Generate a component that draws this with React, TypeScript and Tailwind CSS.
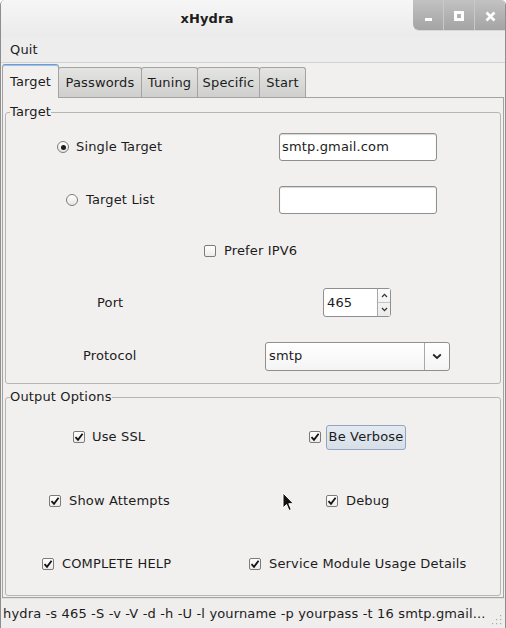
import React from 'react';

const FONT = { fontFamily: '"DejaVu Sans", Verdana, sans-serif' };

function Check({ checked }: { checked?: boolean }) {
  return (
    <span className="flex h-[12px] w-[12px] shrink-0 items-center justify-center rounded-[2px] border border-[#7b7b7b] bg-gradient-to-b from-white to-[#ececec]">
      {checked && (
        <svg width="10" height="10" viewBox="0 0 10 10">
          <path d="M1.5 5.2 L4 7.8 L8.6 1.8" fill="none" stroke="#111" strokeWidth="1.8" />
        </svg>
      )}
    </span>
  );
}

function Radio({ checked }: { checked?: boolean }) {
  return (
    <span className="flex h-[12px] w-[12px] shrink-0 items-center justify-center rounded-full border border-[#7b7b7b] bg-gradient-to-b from-white to-[#e6e6e6]">
      {checked && <span className="h-[5px] w-[5px] rounded-full bg-[#1e1e1e]" />}
    </span>
  );
}

function Tab({ label, width, active }: { label: string; width: string; active?: boolean }) {
  if (active) {
    return (
      <div className={`relative z-10 -mb-px flex h-[34px] items-center justify-center rounded-t-[3px] border border-b-0 border-[#a3a3a3] border-t-[#6f9bd0] bg-[#f1f0ef] shadow-[inset_0_1px_0_#9fc0e6] ${width}`}>
        {label}
      </div>
    );
  }
  return (
    <div className={`-ml-px flex h-[30px] items-center justify-center rounded-t-[3px] border border-b-0 border-[#a3a3a3] bg-gradient-to-b from-[#e4e4e3] to-[#cfcfce] ${width}`}>
      {label}
    </div>
  );
}

export default function App() {
  return (
    <div
      style={FONT}
      className="relative flex h-[628px] w-[506px] flex-col overflow-hidden rounded-t-[5px] border-x border-[#8e8e8e] bg-[#f1f0ef] text-[13px] leading-[16px] tracking-[0.15px] text-[#1c1c1c]"
    >
      {/* title bar */}
      <div className="flex h-[37px] shrink-0 items-start bg-gradient-to-b from-[#f6f6f6] to-[#ebebeb]">
        <div className="flex h-[37px] flex-1 items-center justify-center font-bold">xHydra</div>
        <div className="flex h-[30px] w-[92px] overflow-hidden rounded-bl-[6px] bg-gradient-to-b from-[#c2c2c2] to-[#a4a4a4] shadow-[0_1px_0_#d8d8d8]">
          <div className="flex w-[31px] items-center justify-center border-r border-[#c9c9c9]">
            <span className="mt-[9px] h-[3px] w-[7px] bg-white" />
          </div>
          <div className="flex w-[31px] items-center justify-center border-r border-[#c9c9c9]">
            <span className="mt-[2px] h-[10px] w-[10px] border-[3px] border-white" />
          </div>
          <div className="flex flex-1 items-center justify-center">
            <svg width="11" height="11" viewBox="0 0 11 11" className="mt-[2px]">
              <path d="M1.5 1.5 L9.5 9.5 M9.5 1.5 L1.5 9.5" stroke="white" strokeWidth="2.6" />
            </svg>
          </div>
        </div>
      </div>

      {/* menubar */}
      <div className="flex h-[26px] shrink-0 items-center border-b border-[#d3d2d1] bg-[#eeeded] pl-[9px]">Quit</div>

      {/* tabs */}
      <div className="flex h-[34px] shrink-0 items-end pl-[1px]">
        <Tab label="Target" width="w-[57px]" active />
        <Tab label="Passwords" width="w-[84px]" />
        <Tab label="Tuning" width="w-[57px]" />
        <Tab label="Specific" width="w-[63px]" />
        <Tab label="Start" width="w-[47px]" />
      </div>

      {/* notebook page */}
      <div className="ml-[1px] mr-[1px] flex h-[501px] shrink-0 flex-col border border-[#a3a3a3] bg-[#f1f0ef] px-[2px]">
        <fieldset className="mt-[6px] rounded-[3px] border border-[#b6b5b4] pb-[13px] pt-[13px]">
          <legend className="ml-[4px] leading-[16px]">Target</legend>

          <div className="flex h-[28px] items-center">
            <div className="flex w-[273px] items-center gap-[7px] pl-[51px]">
              <Radio checked />
              <span>Single Target</span>
            </div>
            <div className="flex h-[28px] w-[158px] items-center rounded-[3px] border border-[#8f8f8f] bg-white pl-[2px] shadow-[inset_0_1px_1px_#d6d6d6]">
              smtp.gmail.com
            </div>
          </div>

          <div className="mt-[25px] flex h-[28px] items-center">
            <div className="flex w-[273px] items-center gap-[8px] pl-[60px]">
              <Radio />
              <span>Target List</span>
            </div>
            <div className="h-[28px] w-[158px] rounded-[3px] border border-[#8f8f8f] bg-white shadow-[inset_0_1px_1px_#d6d6d6]" />
          </div>

          <div className="mt-[27px] flex h-[20px] items-center gap-[8px] pl-[198px]">
            <Check />
            <span>Prefer IPV6</span>
          </div>

          <div className="mt-[27px] flex h-[29px] items-center">
            <div className="w-[317px] pl-[91px]">Port</div>
            <div className="flex h-[29px] w-[68px] rounded-[3px] border border-[#8f8f8f] bg-white">
              <div className="flex flex-1 items-center pl-[3px]">465</div>
              <div className="flex w-[13px] flex-col border-l border-[#a8a8a8] bg-gradient-to-b from-[#fbfbfb] to-[#ebebeb]">
                <div className="flex flex-1 items-center justify-center border-b border-[#c4c4c4]">
                  <svg width="7" height="5" viewBox="0 0 7 5">
                    <path d="M1 4 L3.5 1.3 L6 4" fill="none" stroke="#333" strokeWidth="1.2" />
                  </svg>
                </div>
                <div className="flex flex-1 items-center justify-center">
                  <svg width="7" height="5" viewBox="0 0 7 5">
                    <path d="M1 1 L3.5 3.7 L6 1" fill="none" stroke="#333" strokeWidth="1.2" />
                  </svg>
                </div>
              </div>
            </div>
          </div>

          <div className="mt-[25px] flex h-[28px] items-center">
            <div className="w-[259px] pl-[77px]">Protocol</div>
            <div className="flex h-[29px] w-[185px] rounded-[3px] border border-[#8f8f8f] bg-gradient-to-b from-white to-[#f4f4f4]">
              <div className="flex flex-1 items-center pl-[3px]">smtp</div>
              <div className="flex w-[25px] items-center justify-center border-l border-[#a8a8a8]">
                <svg width="10" height="7" viewBox="0 0 10 7">
                  <path d="M1.2 1.5 L5 5 L8.8 1.5" fill="none" stroke="#222" strokeWidth="1.7" />
                </svg>
              </div>
            </div>
          </div>
        </fieldset>

        <fieldset className="mt-[5px] mb-[1px] flex-1 rounded-[3px] border border-[#b6b5b4] pt-[20px]">
          <legend className="ml-[4px] leading-[16px]">Output Options</legend>

          <div className="flex h-[24px] items-center">
            <div className="flex w-[303px] items-center gap-[7px] pl-[67px]">
              <Check checked />
              <span>Use SSL</span>
            </div>
            <div className="flex items-center gap-[5px]">
              <Check checked />
              <span className="flex h-[25px] w-[80px] items-center justify-center rounded-[3px] border border-[#93a5ba] bg-gradient-to-b from-[#e4eaf1] to-[#d6dfe9]">
                Be Verbose
              </span>
            </div>
          </div>

          <div className="mt-[40px] flex h-[24px] items-center">
            <div className="flex w-[320px] items-center gap-[8px] pl-[43px]">
              <Check checked />
              <span>Show Attempts</span>
            </div>
            <div className="flex items-center gap-[8px]">
              <Check checked />
              <span>Debug</span>
            </div>
          </div>

          <div className="mt-[39px] flex h-[24px] items-center">
            <div className="flex w-[243px] items-center gap-[8px] pl-[36px]">
              <Check checked />
              <span>COMPLETE HELP</span>
            </div>
            <div className="flex items-center gap-[8px]">
              <Check checked />
              <span>Service Module Usage Details</span>
            </div>
          </div>
        </fieldset>
      </div>

      {/* status bar */}
      <div className="relative flex flex-1 items-center border-t border-[#e2e1e0] bg-[#efeeed] pl-[2px]">
        <span className="whitespace-nowrap">hydra -s 465 -S -v -V -d -h -U -l yourname -p yourpass -t 16 smtp.gmail...</span>
        <svg width="12" height="12" viewBox="0 0 12 12" className="absolute bottom-[3px] right-[3px]">
          {[
            [10, 2], [10, 6], [6, 6], [10, 10], [6, 10], [2, 10],
          ].map(([x, y], i) => (
            <rect key={i} x={x} y={y} width="1.2" height="1.2" fill="#a9a9a9" />
          ))}
        </svg>
      </div>

      {/* mouse pointer */}
      <svg width="13" height="20" viewBox="0 0 13 20" className="pointer-events-none absolute left-[281px] top-[492px]">
        <path d="M1 1 L1 16 L4.5 12.5 L7 18.5 L9.3 17.5 L6.8 11.7 L11.5 11.7 Z" fill="#111" stroke="white" strokeWidth="1" />
      </svg>
    </div>
  );
}
